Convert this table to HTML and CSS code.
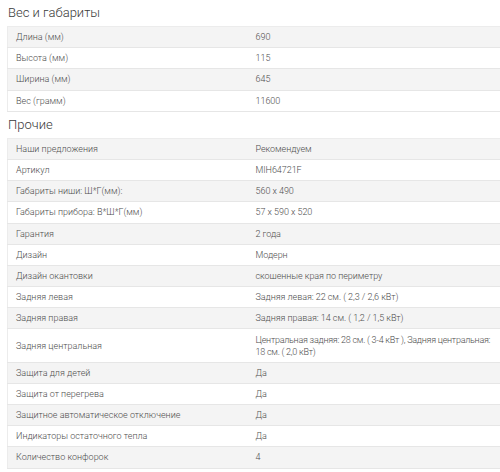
FILE: index.html
```html
<!DOCTYPE html>
<html lang="ru">
<head>
<meta charset="utf-8">
<link rel="stylesheet" href="styles.css">
</head>
<body>
<div class="specs">
  <h3 class="group-title">Вес и габариты</h3>
  <table class="spec-table">
    <colgroup><col class="col-name"><col class="col-value"></colgroup>
    <tr><td>Длина (мм)</td><td>690</td></tr>
    <tr><td>Высота (мм)</td><td>115</td></tr>
    <tr><td>Ширина (мм)</td><td>645</td></tr>
    <tr><td>Вес (грамм)</td><td>11600</td></tr>
  </table>
  <h3 class="group-title">Прочие</h3>
  <table class="spec-table">
    <colgroup><col class="col-name"><col class="col-value"></colgroup>
    <tr><td>Наши предложения</td><td>Рекомендуем</td></tr>
    <tr><td>Артикул</td><td>MIH64721F</td></tr>
    <tr><td>Габариты ниши: Ш*Г(мм):</td><td>560 x 490</td></tr>
    <tr><td>Габариты прибора: В*Ш*Г(мм)</td><td>57 x 590 x 520</td></tr>
    <tr><td>Гарантия</td><td>2 года</td></tr>
    <tr><td>Дизайн</td><td>Модерн</td></tr>
    <tr><td>Дизайн окантовки</td><td>скошенные края по периметру</td></tr>
    <tr><td>Задняя левая</td><td>Задняя левая: 22 см. ( 2,3 / 2,6 кВт)</td></tr>
    <tr><td>Задняя правая</td><td>Задняя правая: 14 см. ( 1,2 / 1,5 кВт)</td></tr>
    <tr><td>Задняя центральная</td><td class="value-long">Центральная задняя: 28 см. ( 3-4 кВт ), Задняя центральная: 18 см. ( 2,0 кВт)</td></tr>
    <tr><td>Защита для детей</td><td>Да</td></tr>
    <tr><td>Защита от перегрева</td><td>Да</td></tr>
    <tr><td>Защитное автоматическое отключение</td><td>Да</td></tr>
    <tr><td>Индикаторы остаточного тепла</td><td>Да</td></tr>
    <tr><td>Количество конфорок</td><td>4</td></tr>
  </table>
</div>
</body>
</html>
```
FILE: styles.css
```css
html, body {
  margin: 0;
  padding: 0;
  background: #fff;
}
body {
  font-family: Roboto, "Liberation Sans", Arial, sans-serif;
  color: #555;
}
.specs {
  padding: 5px 0 0 7px;
  width: 493px;
  overflow: hidden;
}
.group-title {
  margin: 0 0 5px 1px;
  font-size: 13px;
  font-weight: 300;
  line-height: 16px;
  color: #3a3a3a;
}
.spec-table {
  width: 500px;
  table-layout: fixed;
  border-collapse: collapse;
  font-size: 9px;
  font-weight: 300;
  line-height: 12px;
  margin-bottom: 5px;
  border-left: 1px solid #ececec;
  border-top: 1px solid #ececec;
}
.col-name {
  width: 240px;
}
.spec-table td {
  padding: 4.1px 8px;
  border-bottom: 1px solid #e6e6e6;
  vertical-align: middle;
  text-align: left;
  color: #4d4d4d;
}
.spec-table td:last-child {
  letter-spacing: -0.05px;
}
.spec-table td.value-long {
  letter-spacing: -0.25px;
}
.spec-table tr:nth-child(odd) td {
  background: #f4f4f4;
}
```
